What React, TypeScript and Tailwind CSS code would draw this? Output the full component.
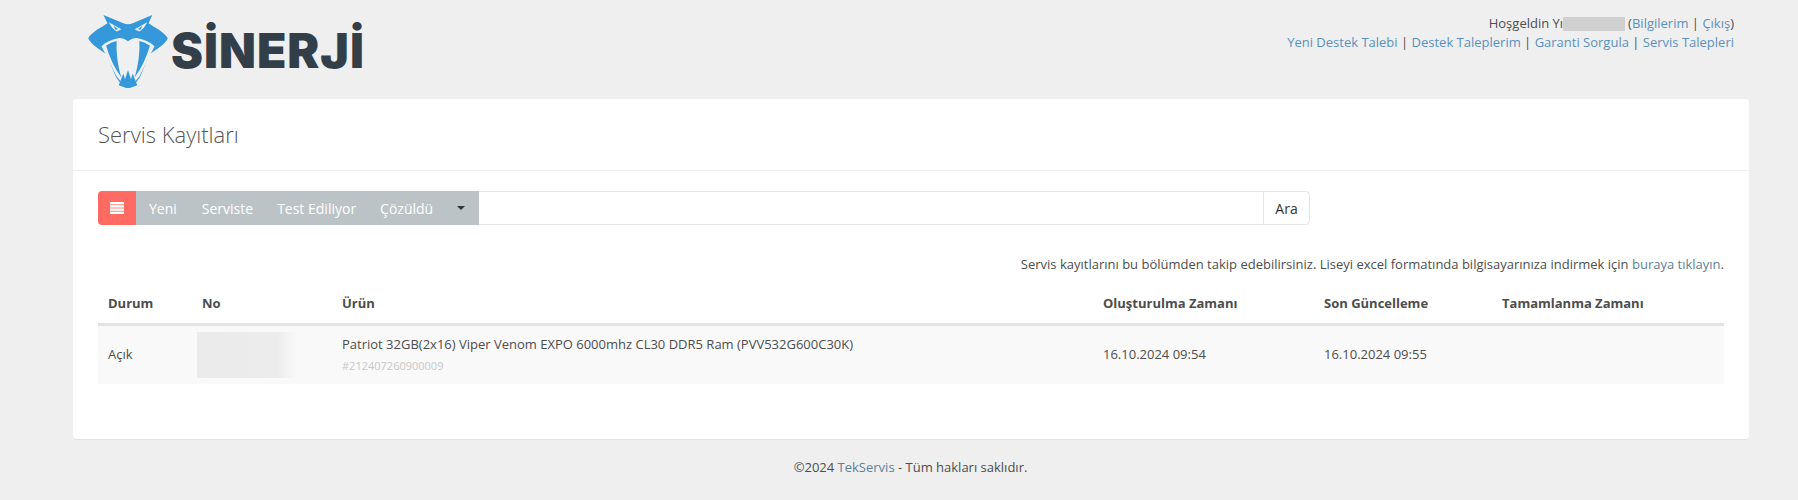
const Snake = () => (
  <svg viewBox="22 20 240 220" className="w-[80px] h-[73px] shrink-0">
    {/* head */}
    <path
      d="M68 20 L128 45 C136 49 148 49 156 45 L215 20 L204 45 C222 58 248 68 262 90 C252 112 226 122 206 140 L182 198 C176 216 160 232 142 240 C124 232 108 216 102 198 L78 140 C58 122 32 112 22 90 C36 68 62 58 80 45 Z"
      fill="#3498db"
    />
    {/* eyes */}
    <path d="M84 42 L122 63 L108 70 C98 64 90 54 84 42 Z" fill="#eef0f1" />
    <path d="M200 42 L162 63 L176 70 C186 64 194 54 200 42 Z" fill="#eef0f1" />
    <path d="M98 52 L112 62 L105 65 Z" fill="#3498db" />
    <path d="M186 52 L172 62 L179 65 Z" fill="#3498db" />
    {/* mouth */}
    <path
      d="M62 114 C74 102 92 94 112 90 C122 88 130 92 142 99 C154 92 162 88 172 90 C192 94 210 102 222 114 L176 205 L162 222 L142 230 L122 222 L108 205 Z"
      fill="#eef0f1"
    />
    {/* fangs */}
    <path d="M76 112 C88 104 98 100 108 98 C106 130 110 168 122 208 C100 178 85 144 76 112 Z" fill="#3498db" />
    <path d="M208 112 C196 104 186 100 176 98 C178 130 174 168 162 208 C184 178 199 144 208 112 Z" fill="#3498db" />
    <path d="M128 196 L133 214 L142 186 L151 214 L156 196 L170 232 L142 242 L114 232 Z" fill="#3498db" />
  </svg>
);

const Link = ({ children }: { children: React.ReactNode }) => (
  <a href="#" className="text-[#5a8fc0]">{children}</a>
);

const columns = [
  { label: "Durum", width: "w-[94px]" },
  { label: "No", width: "w-[140px]" },
  { label: "Ürün", width: "w-[761px]" },
  { label: "Oluşturulma Zamanı", width: "w-[221px]" },
  { label: "Son Güncelleme", width: "w-[178px]" },
  { label: "Tamamlanma Zamanı", width: "w-[221px]" },
];

export default function App() {
  return (
    <div className="min-h-[500px] bg-[#efefef] font-['Open_Sans',sans-serif] text-[13px] leading-[19px] text-[#4d4d4d]">
      <header className="h-[99px] pl-[88px] pr-[64px] flex justify-between">
        <div className="flex items-start pt-[15px]">
          <Snake />
          <span className="ml-[3px] mt-[10px] font-['Inter',sans-serif] font-black text-[48px] leading-[52px] tracking-[1px] text-[#333f48]">
            SİNERJİ
          </span>
        </div>
        <div className="pt-[14px] text-right">
          <div className="flex justify-end items-center h-[19px]">
            <span>Hoşgeldin Yı</span>
            <span className="w-[62px] h-[14px] bg-[#d0d0d0]" />
            <span className="ml-[3px]">
              (<Link>Bilgilerim</Link> | <Link>Çıkış</Link>)
            </span>
          </div>
          <div>
            <Link>Yeni Destek Talebi</Link> | <Link>Destek Taleplerim</Link> | <Link>Garanti Sorgula</Link> | <Link>Servis Talepleri</Link>
          </div>
        </div>
      </header>

      <main className="mx-[73px] w-[1676px] h-[341px] bg-white rounded-[4px] border-b border-[#e2e2e2]">
        <div className="h-[72px] border-b border-[#f0f0f0] px-[25px] flex items-center">
          <h1 className="font-light text-[22px] text-[#555]">Servis Kayıtları</h1>
        </div>

        <div className="px-[25px] pt-[20px]">
          <div className="flex h-[34px]">
            <div className="w-[38px] bg-[#ff6b63] rounded-l-[4px] flex items-center justify-center">
              <svg viewBox="0 0 14 12" className="w-[14px] h-[12px]" fill="#fff">
                <rect x="0" y="0" width="14" height="2.4" />
                <rect x="0" y="3.2" width="14" height="2.4" />
                <rect x="0" y="6.4" width="14" height="2.4" />
                <rect x="0" y="9.6" width="14" height="2.4" />
              </svg>
            </div>
            <div className="w-[343px] bg-[#bcc3c6] flex items-center text-white text-[14px]">
              <span className="ml-[13px]">Yeni</span>
              <span className="ml-[25px]">Serviste</span>
              <span className="ml-[24px]">Test Ediliyor</span>
              <span className="ml-[24px]">Çözüldü</span>
              <span className="ml-[24px] w-0 h-0 border-x-[4px] border-x-transparent border-t-[4px] border-t-[#333]" />
            </div>
            <div className="w-[784px] border-y border-[#e5e5e5]" />
            <div className="w-[47px] border border-[#e5e5e5] rounded-r-[4px] flex items-center justify-center text-[14px] text-[#333]">
              Ara
            </div>
          </div>

          <p className="mt-[30px] text-right">
            Servis kayıtlarını bu bölümden takip edebilirsiniz. Liseyi excel formatında bilgisayarınıza indirmek için{" "}
            <a href="#" className="text-[#5b8198]">buraya tıklayın</a>.
          </p>

          <div className="mt-[9px] flex h-[43px] items-center border-b-[3px] border-[#e3e3e3] font-bold">
            {columns.map((c) => (
              <div key={c.label} className={`${c.width} shrink-0 pl-[10px]`}>
                {c.label}
              </div>
            ))}
          </div>

          <div className="flex h-[58px] items-center bg-[#f9f9f9]">
            <div className="w-[94px] shrink-0 pl-[10px] pb-[1px]">Açık</div>
            <div className="w-[140px] shrink-0 pl-[5px]">
              <div className="w-[100px] h-[46px] bg-linear-to-r from-[#ebebeb] via-[#ececec] via-80% to-[#f9f9f9]" />
            </div>
            <div className="w-[761px] shrink-0 pl-[10px]">
              <div>Patriot 32GB(2x16) Viper Venom EXPO 6000mhz CL30 DDR5 Ram (PVV532G600C30K)</div>
              <div className="mt-[2px] text-[11px] text-[#c8c8c8]">#212407260900009</div>
            </div>
            <div className="w-[221px] shrink-0 pl-[10px] pb-[1px]">16.10.2024 09:54</div>
            <div className="w-[178px] shrink-0 pl-[10px] pb-[1px]">16.10.2024 09:55</div>
          </div>
        </div>
      </main>

      <footer className="pt-[18px] pl-[23px] text-center">
        ©2024 <a href="#" className="text-[#5b8198]">TekServis</a> - Tüm hakları saklıdır.
      </footer>
    </div>
  );
}
